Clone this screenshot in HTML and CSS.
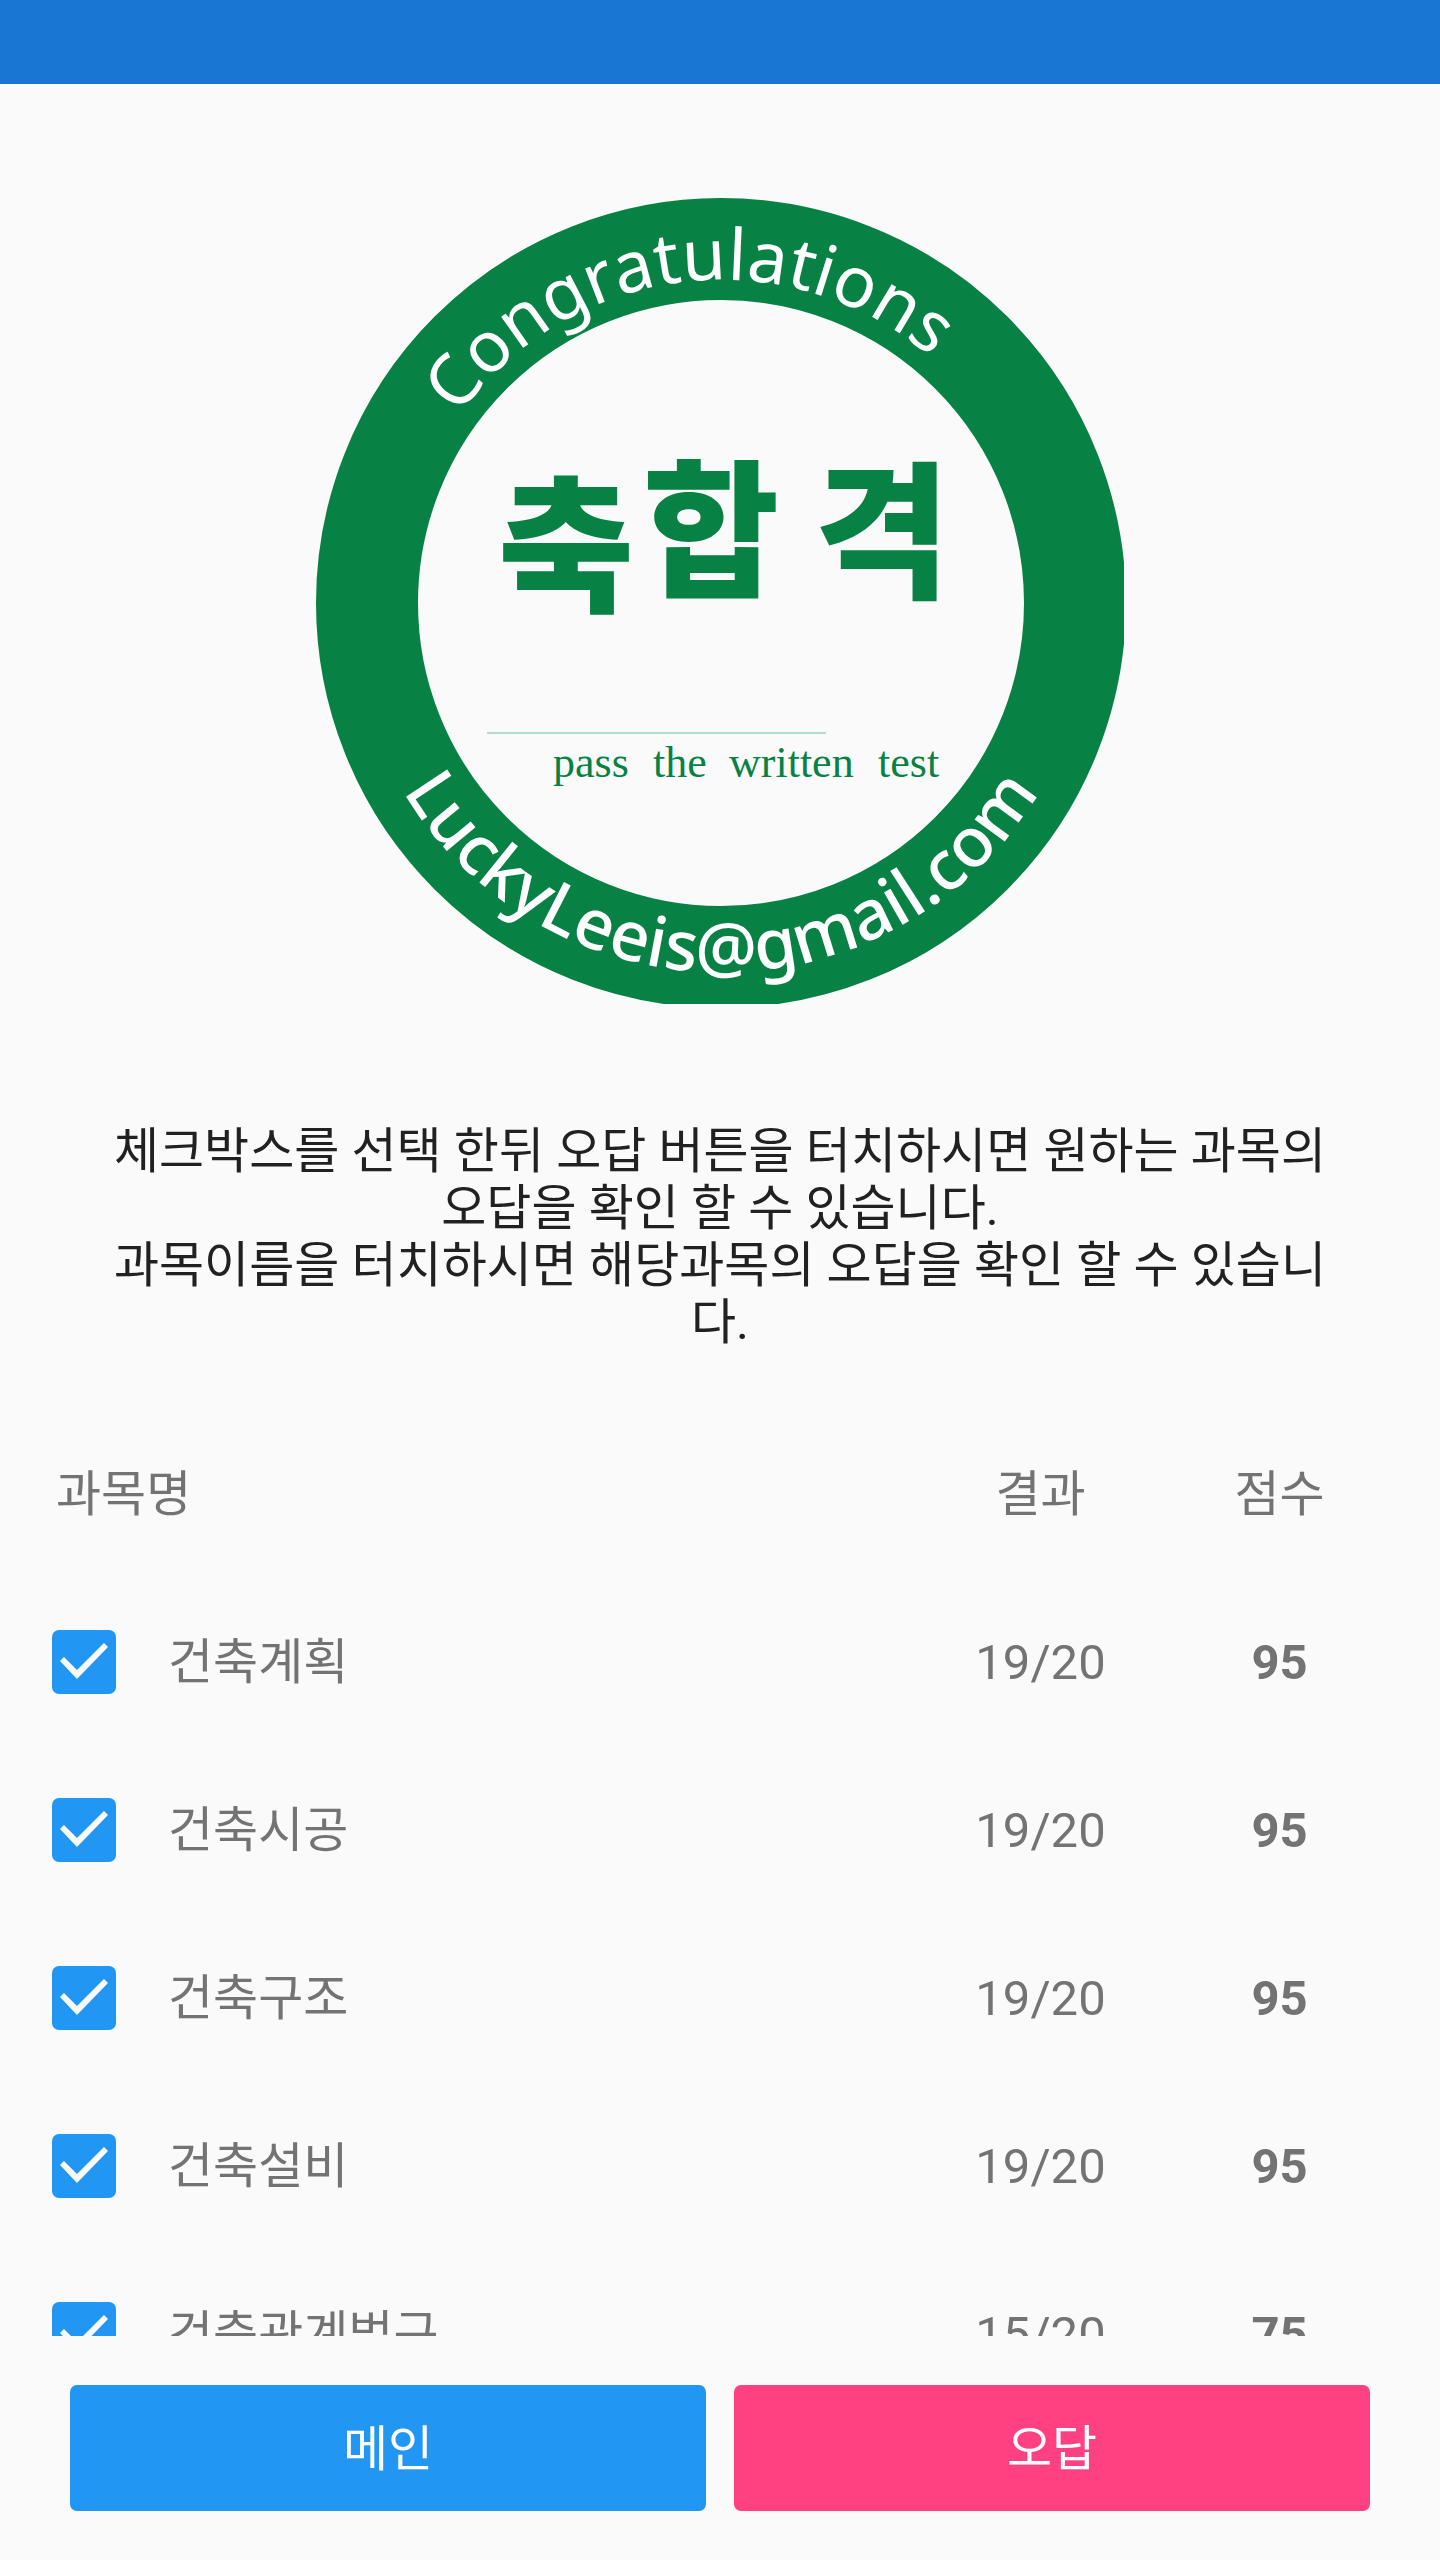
FILE: index.html
```html
<!DOCTYPE html>
<html lang="ko">
<head>
<meta charset="utf-8">
<meta name="viewport" content="width=device-width, initial-scale=1">
<title>축합격</title>
<link rel="stylesheet" href="styles.css">
</head>
<body>
<div class="status-bar"></div>
<main class="result">
  <svg class="emblem" viewBox="0 0 808 806" role="img" aria-label="축합격">
    <defs>
      <path id="arc-top" d="M143 218A321 321 0 0 1 700 275"/>
      <path id="arc-bottom" d="M87 593A370 370 0 0 0 744 553"/>
    </defs>
    <circle class="ring" cx="405" cy="405" r="354" />
    <text class="ring-text ring-text-top"><textPath href="#arc-top">Congratulations</textPath></text>
    <text class="ring-text ring-text-bottom"><textPath href="#arc-bottom">LuckyLeeis@gmail.com</textPath></text>
    <g class="emblem-title">
      <text x="182" y="402">축</text>
      <text x="327" y="387">합</text>
      <text x="498" y="389">격</text>
    </g>
    <path class="rule" d="M171 535H510"/>
    <g class="emblem-note">
      <text x="237" y="579">pass</text>
      <text x="337" y="579">the</text>
      <text x="413" y="579">written</text>
      <text x="562" y="579">test</text>
    </g>
  </svg>
  <p class="guide">체크박스를 선택 한뒤 오답 버튼을 터치하시면 원하는 과목의 오답을 확인 할 수 있습니다.<br>과목이름을 터치하시면 해당과목의 오답을 확인 할 수 있습니다.</p>
  <div class="scores">
    <table class="score-table">
      <colgroup><col class="col-check"><col><col class="col-value"><col class="col-value"></colgroup>
      <thead>
        <tr><th class="heading-name" colspan="2" scope="col">과목명</th><th scope="col">결과</th><th scope="col">점수</th></tr>
      </thead>
      <tbody>
        <tr><td class="check-cell"><input class="check" type="checkbox" id="s1" checked></td><td class="name"><label for="s1">건축계획</label></td><td>19/20</td><td class="score">95</td></tr>
        <tr><td class="check-cell"><input class="check" type="checkbox" id="s2" checked></td><td class="name"><label for="s2">건축시공</label></td><td>19/20</td><td class="score">95</td></tr>
        <tr><td class="check-cell"><input class="check" type="checkbox" id="s3" checked></td><td class="name"><label for="s3">건축구조</label></td><td>19/20</td><td class="score">95</td></tr>
        <tr><td class="check-cell"><input class="check" type="checkbox" id="s4" checked></td><td class="name"><label for="s4">건축설비</label></td><td>19/20</td><td class="score">95</td></tr>
        <tr><td class="check-cell"><input class="check" type="checkbox" id="s5" checked></td><td class="name"><label for="s5">건축관계법규</label></td><td>15/20</td><td class="score">75</td></tr>
      </tbody>
    </table>
  </div>
</main>
<footer class="actions">
  <button class="action action-main" type="button">메인</button>
  <button class="action action-wrong" type="button">오답</button>
</footer>
</body>
</html>
```
FILE: styles.css
```css
* {
  box-sizing: border-box;
}

body {
  display: flex;
  flex-direction: column;
  height: 100vh;
  margin: 0;
  background: #fafafa;
  color: #737373;
  font-family: Roboto, "Noto Sans CJK KR", sans-serif;
  font-size: 49px;
  line-height: 57px;
}

.status-bar {
  flex: none;
  height: 84px;
  background: #1976d2;
}

.result {
  display: flex;
  flex: 1;
  flex-direction: column;
  min-height: 0;
  overflow: hidden;
  padding-top: 114px;
}

.emblem {
  flex: none;
  align-self: center;
  width: 808px;
  max-width: 100%;
}

.ring {
  fill: none;
  stroke: #088144;
  stroke-width: 102px;
}

.ring-text {
  fill: #fff;
  font-family: "Noto Sans", sans-serif;
}

.ring-text-top {
  font-size: 71px;
}

.ring-text-bottom {
  font-size: 69px;
  font-weight: 500;
}

.emblem-title {
  fill: #088144;
  font-family: "Noto Sans CJK KR", sans-serif;
  font-size: 148px;
  font-weight: 900;
}

.emblem-note {
  fill: #088144;
  font-family: "Liberation Serif", serif;
  font-size: 44px;
}

.rule {
  stroke: #b5dbcb;
  stroke-width: 2px;
}

.guide {
  flex: none;
  margin: 0;
  padding: 119px 112px 59px;
  color: #212121;
  text-align: center;
}

.scores {
  flex: 1;
  min-height: 0;
  overflow: hidden;
  padding-right: 41px;
}

.score-table {
  width: 100%;
  border-collapse: collapse;
  table-layout: fixed;
  text-align: center;
}

.col-check {
  width: 168px;
}

.col-value {
  width: 239px;
}

.score-table th,
.score-table td {
  height: 168px;
  padding: 0;
  font-weight: 400;
}

.score-table .heading-name {
  padding-left: 56px;
  text-align: left;
}

.score-table .name {
  text-align: left;
}

.score-table .score {
  font-weight: 700;
}

.check {
  display: block;
  width: 64px;
  height: 64px;
  margin: 0 0 0 52px;
  border-radius: 7px;
  appearance: none;
  background: #fafafa;
  border: 7px solid #737373;
}

.check:checked {
  background: #2196f3;
  border: 0;
}

.check:checked::before {
  display: block;
  width: 64px;
  height: 64px;
  background: #fafafa;
  clip-path: polygon(8px 31px, 12px 27px, 25px 40px, 52px 13px, 56px 17px, 25px 49px);
  content: "";
}

.actions {
  display: flex;
  flex: none;
  gap: 28px;
  padding: 49px 70px;
}

.action {
  flex: 1;
  height: 126px;
  padding: 2px 0 0;
  border: 0;
  border-radius: 7px;
  color: #fff;
  font: inherit;
}

.action-main {
  background: #2196f3;
}

.action-wrong {
  background: #ff4081;
}
```
